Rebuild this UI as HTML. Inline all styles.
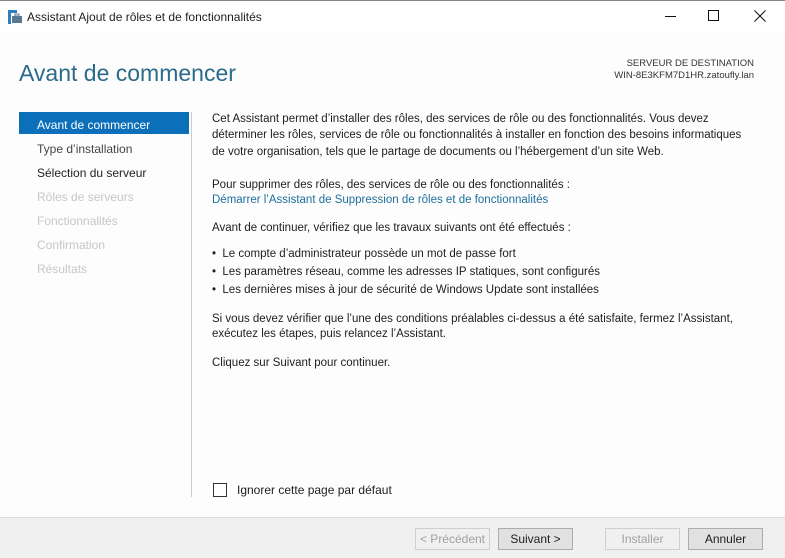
<!DOCTYPE html>
<html><head><meta charset="utf-8"><style>
*{margin:0;padding:0;box-sizing:border-box}
body{width:785px;height:558px;overflow:hidden;background:#fff;font-family:"Liberation Sans",sans-serif;color:#1e1e1e;position:relative}
.a{position:absolute;white-space:nowrap;line-height:16px;font-size:11.5px}
.s{font-size:12px}
.btn{position:absolute;top:528px;height:22px;border:1px solid #adadad;background:#e1e1e1;font-size:12px;text-align:center;line-height:20px}
.dis{background:#f0f0f0;border-color:#cfcfcf;color:#a0a0a0}
</style></head><body>
<div style="position:absolute;left:0;top:0;width:785px;height:1px;background:#888"></div>
<svg style="position:absolute;left:8px;top:10px" width="14" height="14" viewBox="0 0 14 14"><rect x="0" y="0" width="3" height="14" fill="#2d7fc1"/><rect x="0" y="0" width="9" height="3" fill="#2d7fc1"/><rect x="4" y="6" width="10" height="7" fill="#5a7891"/><rect x="7" y="4" width="4" height="2" fill="none" stroke="#5a7891"/></svg>
<div class="a" style="left:27px;top:9px;font-size:12px">Assistant Ajout de rôles et de fonctionnalités</div>
<div style="position:absolute;left:665px;top:16px;width:11px;height:1px;background:#111"></div>
<div style="position:absolute;left:708px;top:10px;width:11px;height:11px;border:1px solid #111"></div>
<svg style="position:absolute;left:754px;top:10px" width="12" height="12"><path d="M0.5 0.5L11.5 11.5M11.5 0.5L0.5 11.5" stroke="#111" stroke-width="1"/></svg>
<div style="position:absolute;left:0;top:32px;width:785px;height:485px;background:#fdfdfd"></div>
<div class="a" style="left:19px;top:58px;font-size:23px;line-height:30px;color:#2b6a8a;font-weight:300">Avant de commencer</div>
<div class="a" style="right:31px;top:58px;font-size:9.5px;line-height:12px;text-align:right;color:#333">SERVEUR DE DESTINATION<br>WIN-8E3KFM7D1HR.zatoufly.lan</div>
<div style="position:absolute;left:19px;top:112px;width:170px;height:22px;background:#0b6fba"></div>
<div class="a s" style="left:37px;top:117px;color:#fff">Avant de commencer</div>
<div class="a s" style="left:37px;top:141px;color:#444">Type d’installation</div>
<div class="a s" style="left:37px;top:165px;color:#222">Sélection du serveur</div>
<div class="a s" style="left:37px;top:189px;color:#c6c6c6">Rôles de serveurs</div>
<div class="a s" style="left:37px;top:213px;color:#c6c6c6">Fonctionnalités</div>
<div class="a s" style="left:37px;top:237px;color:#c6c6c6">Confirmation</div>
<div class="a s" style="left:37px;top:261px;color:#c6c6c6">Résultats</div>
<div style="position:absolute;left:191px;top:112px;width:1px;height:385px;background:#ccc"></div>
<div class="a" style="left:212px;top:111px">Cet Assistant permet d’installer des rôles, des services de rôle ou des fonctionnalités. Vous devez</div>
<div class="a" style="left:212px;top:127px">déterminer les rôles, services de rôle ou fonctionnalités à installer en fonction des besoins informatiques</div>
<div class="a" style="left:212px;top:144px">de votre organisation, tels que le partage de documents ou l’hébergement d’un site Web.</div>
<div class="a" style="left:212px;top:177px">Pour supprimer des rôles, des services de rôle ou des fonctionnalités :</div>
<div class="a" style="left:212px;top:192px;color:#1f6f9c">Démarrer l’Assistant de Suppression de rôles et de fonctionnalités</div>
<div class="a" style="left:212px;top:220px">Avant de continuer, vérifiez que les travaux suivants ont été effectués :</div>
<div class="a" style="left:212px;top:246px">•&nbsp; Le compte d’administrateur possède un mot de passe fort</div>
<div class="a" style="left:212px;top:264px">•&nbsp; Les paramètres réseau, comme les adresses IP statiques, sont configurés</div>
<div class="a" style="left:212px;top:282px">•&nbsp; Les dernières mises à jour de sécurité de Windows Update sont installées</div>
<div class="a" style="left:212px;top:311px">Si vous devez vérifier que l’une des conditions préalables ci-dessus a été satisfaite, fermez l’Assistant,</div>
<div class="a" style="left:212px;top:326px">exécutez les étapes, puis relancez l’Assistant.</div>
<div class="a" style="left:212px;top:355px">Cliquez sur Suivant pour continuer.</div>
<div style="position:absolute;left:213px;top:483px;width:14px;height:14px;border:1px solid #333;background:#fff"></div>
<div class="a" style="left:237px;top:482px;font-size:12px">Ignorer cette page par défaut</div>
<div style="position:absolute;left:0;top:517px;width:785px;height:41px;background:#f0f0f0;border-top:1px solid #dcdcdc"></div>
<div class="btn dis" style="left:415px;width:75px">&lt; Précédent</div>
<div class="btn" style="left:498px;width:75px">Suivant &gt;</div>
<div class="btn dis" style="left:605px;width:75px">Installer</div>
<div class="btn" style="left:688px;width:75px">Annuler</div>
</body></html>
